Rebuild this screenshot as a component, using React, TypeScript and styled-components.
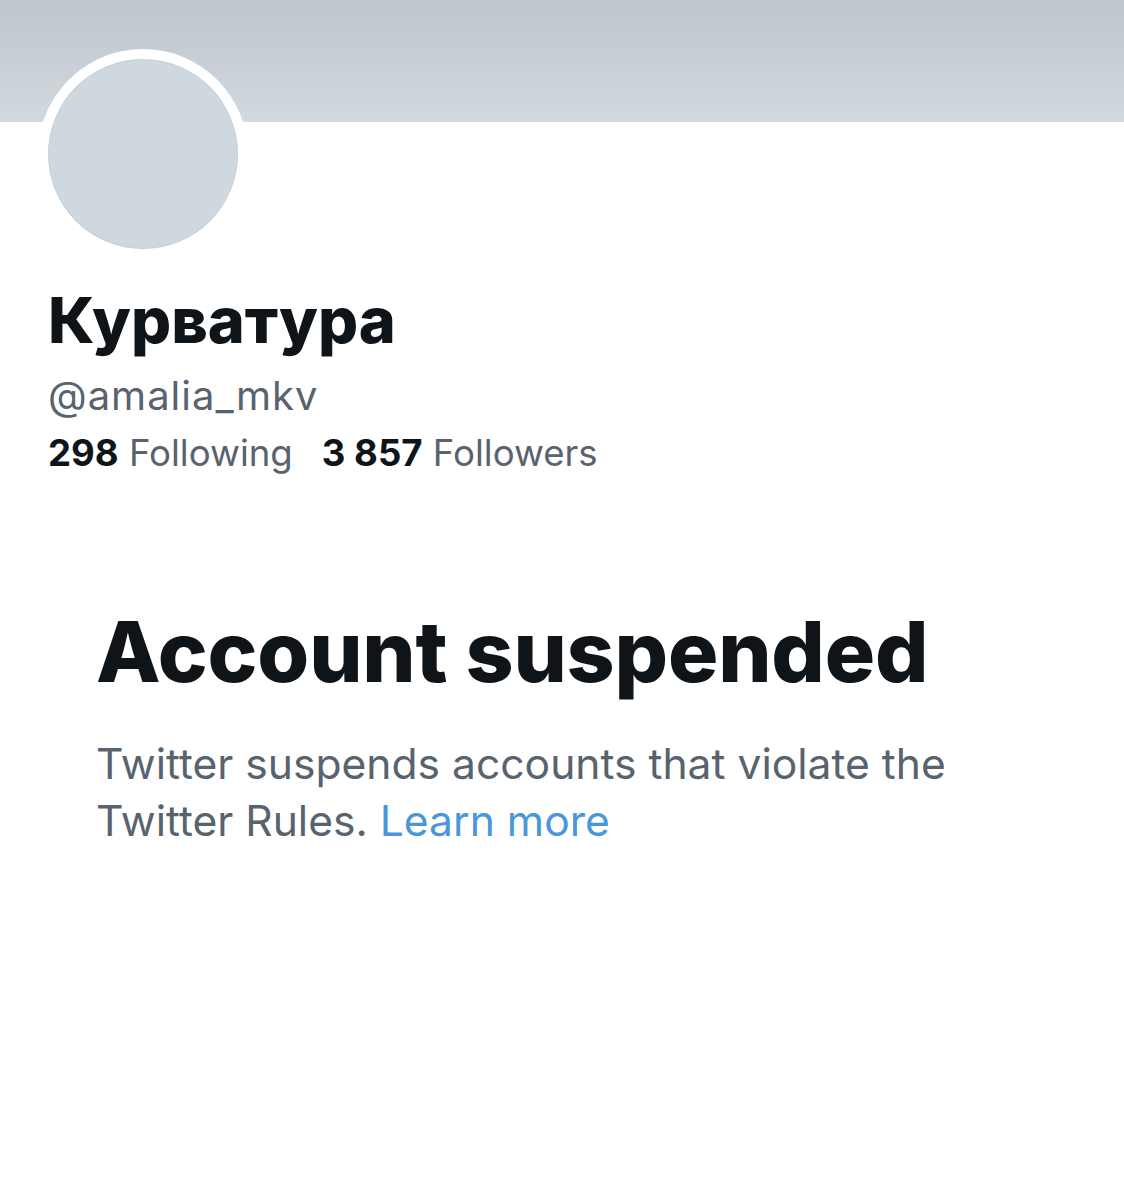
import styled, { createGlobalStyle } from "styled-components";

const GlobalStyle = createGlobalStyle`
  body {
    margin: 0;
    background: #ffffff;
    font-family: Inter, "Liberation Sans", sans-serif;
    -webkit-font-smoothing: antialiased;
  }
`;

export default function App() {
  return (
    <Page>
      <GlobalStyle />
      <Banner />
      <Profile>
        <AvatarRing>
          <Avatar />
        </AvatarRing>
        <Name>Курватура</Name>
        <Handle>@amalia_mkv</Handle>
        <Stats>
          <Stat>
            <b>298</b> Following
          </Stat>
          <Stat>
            <b>3 857</b> Followers
          </Stat>
        </Stats>
      </Profile>
      <Notice>
        <Heading>Account suspended</Heading>
        <Body>
          Twitter suspends accounts that violate the Twitter Rules.{" "}
          <Link href="#">Learn more</Link>
        </Body>
      </Notice>
    </Page>
  );
}

const Page = styled.div`
  width: 1124px;
  min-height: 1200px;
  background: #fff;
`;

const Banner = styled.div`
  height: 122px;
  background: linear-gradient(180deg, #bec6ce 0%, #c8cfd6 55%, #d3dade 100%);
`;

const Profile = styled.div`
  padding-left: 48px;
  display: flex;
  flex-direction: column;
  align-items: flex-start;
`;

const AvatarRing = styled.div`
  margin-top: -73px;
  margin-left: -10px;
  width: 190px;
  height: 190px;
  padding: 10px;
  border-radius: 50%;
  background: #fff;
`;

const Avatar = styled.div`
  width: 190px;
  height: 190px;
  border-radius: 50%;
  background: #cfd8de;
  box-shadow: inset 0 0 0 1px rgba(0, 0, 0, 0.04);
`;

const Name = styled.h1`
  margin: 23px 0 0;
  font-size: 63px;
  line-height: 76px;
  font-weight: 800;
  color: #0f1419;
`;

const Handle = styled.div`
  margin-top: 14px;
  font-size: 40px;
  line-height: 48px;
  letter-spacing: 1px;
  color: #58636e;
`;

const Stats = styled.div`
  margin-top: 11px;
  display: flex;
  gap: 29px;
  font-size: 36.6px;
  line-height: 44px;
  color: #58636e;
`;

const Stat = styled.span`
  b {
    font-weight: 700;
    color: #0f1419;
  }
`;

const Notice = styled.div`
  padding: 127px 0 0 96px;
  width: 900px;
`;

const Heading = styled.h2`
  margin: 0;
  font-size: 84px;
  line-height: 100px;
  font-weight: 800;
  color: #0f1419;
  letter-spacing: -0.2px;
`;

const Body = styled.p`
  margin: 33px 0 0;
  font-size: 42.6px;
  line-height: 57px;
  color: #58636e;
`;

const Link = styled.a`
  color: #4a97d8;
  text-decoration: none;
`;
